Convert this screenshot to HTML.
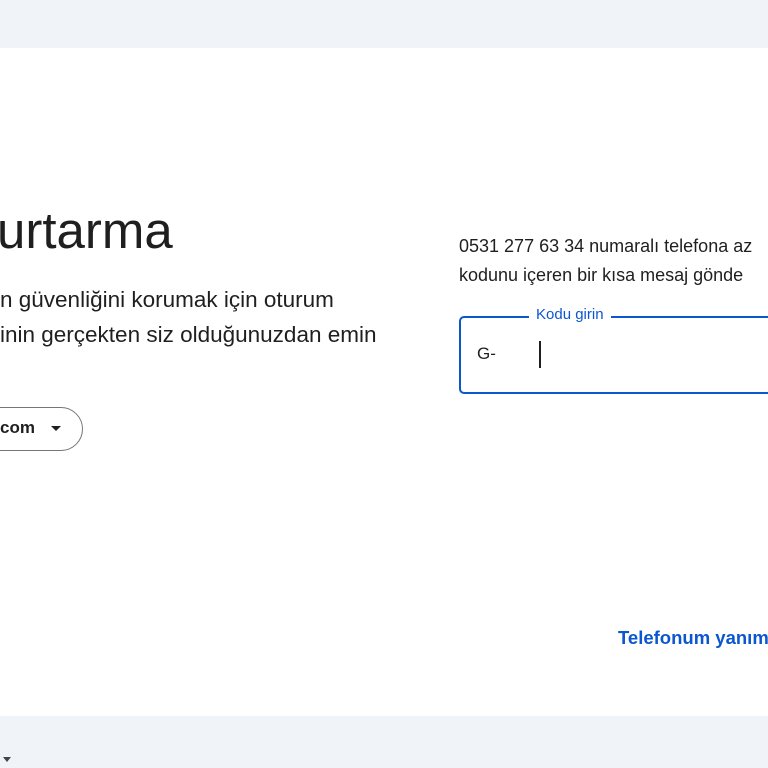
<!DOCTYPE html>
<html><head><style>
body{margin:0;width:768px;height:768px;overflow:hidden;background:#f0f4f9;font-family:"Liberation Sans",sans-serif;position:relative;color:#1f1f1f}
.card{position:absolute;left:-40px;top:48px;width:860px;height:668px;background:#fff;border-radius:28px}
.a{position:absolute;white-space:nowrap}
</style></head><body>
<div class="card"></div>
<div class="a" style="left:-3px;top:201px;font-size:51px;color:#1f1f1f">urtarma</div>
<div class="a" style="left:0;top:282px;font-size:22.5px;line-height:35px;color:#1f1f1f">n güvenliğini korumak için oturum<br>inin gerçekten siz olduğunuzdan emin</div>
<div class="a" style="left:-40px;top:407px;width:121px;height:42px;border:1px solid #747775;border-radius:22px"></div>
<div class="a" style="left:0;top:418px;font-size:17px;font-weight:bold;color:#1f1f1f">com</div>
<div class="a" style="left:51px;top:426px;width:0;height:0;border-left:5px solid transparent;border-right:5px solid transparent;border-top:5px solid #1f1f1f"></div>
<div class="a" style="left:459px;top:232px;font-size:18px;line-height:29px;color:#1f1f1f">0531 277 63 34 numaralı telefona az<br>kodunu içeren bir kısa mesaj gönde</div>
<div class="a" style="left:459px;top:316px;width:330px;height:74px;border:2px solid #0b57d0;border-radius:5px"></div>
<div class="a" style="left:529px;top:306px;padding:0 7px;background:#fff;font-size:15px;color:#0b57d0">Kodu girin</div>
<div class="a" style="left:477px;top:344px;font-size:17px;color:#1f1f1f">G-</div>
<div class="a" style="left:539px;top:341px;width:2px;height:27px;background:#1f1f1f"></div>
<div class="a" style="left:618px;top:627px;font-size:18.5px;font-weight:bold;color:#0b57d0">Telefonum yanım</div>
<div class="a" style="left:3px;top:757px;width:0;height:0;border-left:4px solid transparent;border-right:4px solid transparent;border-top:5px solid #444"></div>
</body></html>
